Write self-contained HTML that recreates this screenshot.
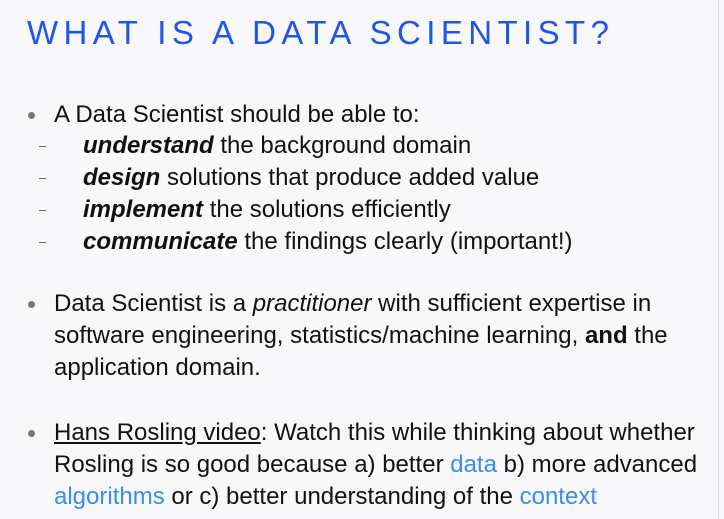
<!DOCTYPE html>
<html><head><meta charset="utf-8"><style>
html,body{margin:0;padding:0;}
body{width:724px;height:519px;background:#f8f8fa;position:relative;overflow:hidden;font-family:"Liberation Sans",sans-serif;color:#111;}
.t{position:absolute;left:27px;top:14px;font-size:33px;letter-spacing:5.4px;color:#1f56e6;white-space:nowrap;}
.l{position:absolute;font-size:24px;white-space:nowrap;line-height:28px;letter-spacing:0px;}
.b{position:absolute;left:28px;width:7px;height:7px;border-radius:50%;background:#777;}
.d{position:absolute;left:39px;width:7px;height:1px;background:#666;}
.bl{color:#3a8ee6;}
</style></head><body>
<div style="position:absolute;right:5px;top:0;width:1px;height:519px;background:#ddd"></div>
<div class="t">WHAT IS A DATA SCIENTIST?</div>

<div class="b" style="top:112px"></div>
<div class="l" style="left:54px;top:101px">A Data Scientist should be able to:</div>
<div class="d" style="top:146px"></div>
<div class="l" style="left:83px;top:132px"><b><i>understand</i></b> the background domain</div>
<div class="d" style="top:178px"></div>
<div class="l" style="left:83px;top:164px"><b><i>design</i></b> solutions that produce added value</div>
<div class="d" style="top:210px"></div>
<div class="l" style="left:83px;top:196px"><b><i>implement</i></b> the solutions efficiently</div>
<div class="d" style="top:242px"></div>
<div class="l" style="left:83px;top:228px"><b><i>communicate</i></b> the findings clearly (important!)</div>

<div class="b" style="top:301px"></div>
<div class="l" style="left:54px;top:290px">Data Scientist is a <i>practitioner</i> with sufficient expertise in</div>
<div class="l" style="left:54px;top:322px">software engineering, statistics/machine learning, <b>and</b> the</div>
<div class="l" style="left:54px;top:354px">application domain.</div>

<div class="b" style="top:430px"></div>
<div class="l" style="left:54px;top:419px"><u>Hans Rosling video</u>: Watch this while thinking about whether</div>
<div class="l" style="left:54px;top:451px">Rosling is so good because a) better <span class="bl">data</span> b) more advanced</div>
<div class="l" style="left:54px;top:483px"><span class="bl">algorithms</span> or c) better understanding of the <span class="bl">context</span></div>
</body></html>
